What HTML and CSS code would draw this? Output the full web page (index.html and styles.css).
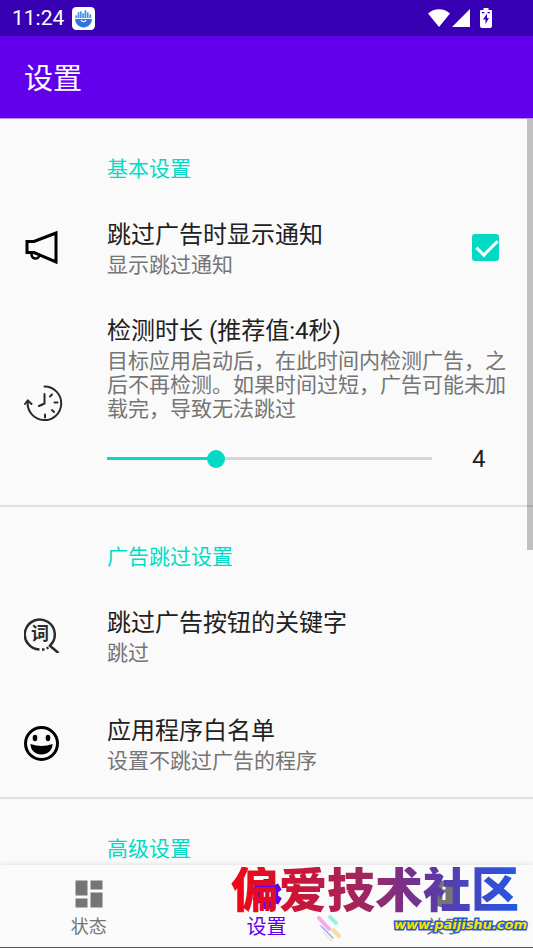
FILE: index.html
```html
<!DOCTYPE html>
<html lang="zh-CN">
<head>
    <meta charset="UTF-8">
    <meta name="viewport" content="width=device-width, initial-scale=1.0">
    <title>设置</title>
    <link rel="stylesheet" href="styles.css">
</head>
<body>
    <div class="status-bar">
        <span class="clock">11:24</span>
        <svg class="app-badge" viewBox="0 0 22 22">
            <rect width="22" height="22" rx="4" fill="#fff"/>
            <path d="M3 11.500h16c0 4.500-3.500 8-8 8s-8-3.500-8-8z" fill="#2f76e0"/>
            <path d="M4 10.500V8M6.200 10.500V5M8.400 10.500V4M10.600 10.500V6M12.800 10.500V3M15 10.500V5M17.500 10.500V7" stroke="#4a90e8" stroke-width="1.700"/>
            <path d="M8.500 12.500q2.500 3 5 0" fill="none" stroke="#fff" stroke-width="1.200"/>
        </svg>
        <div class="status-icons">
            <svg class="wifi" viewBox="0 0 22 18"><path d="M0 4.500C6-1.300 16-1.300 22 4.500L11 18z"/></svg>
            <svg class="signal" viewBox="0 0 18 18"><path d="M18 0v18H0z"/></svg>
            <svg class="battery" viewBox="0 0 12 20">
                <path fill-rule="evenodd" d="M3.500 0h5v2H11q1 0 1 1v15q0 2-2 2H2q-2 0-2-2V3q0-1 1-1h2.500zM7 5.500L3 11.500h2.500V16L9 10H7zM2 4v1.300h2.500V4zM7.500 4v1.300H10V4z"/>
            </svg>
        </div>
    </div>

    <header class="app-bar">
        <h1>设置</h1>
    </header>

    <main class="content">
        <section class="group">
            <h2>基本设置</h2>
            <label class="row">
                <span class="row-icon">
                    <svg viewBox="0 0 36 36" fill="none" stroke="#000" stroke-width="3">
                        <path d="M3 12.500h7L32 4v29L10 23.500H3z"/>
                        <path d="M7.500 24c-.5 7 7.500 7 8 2" stroke-width="2.500"/>
                    </svg>
                </span>
                <span class="row-text">
                    <span class="row-title">跳过广告时显示通知</span>
                    <span class="row-summary">显示跳过通知</span>
                </span>
                <input class="check" type="checkbox" checked>
            </label>
            <div class="row">
                <span class="row-icon">
                    <svg class="clock-icon" viewBox="0 0 40 38" fill="none" stroke="#2b2b2b" stroke-width="2" stroke-linecap="round">
                        <path d="M20.500 2.500a16.800 16.800 0 1 1-16.800 15.500"/>
                        <path d="M1 20l2.800-3.500L7.500 20M20.500 10v9.500L15 22"/>
                        <path d="M26 12.500l2-2M30.500 18.500h3M28 26l2 2M21 30.500v3"/>
                    </svg>
                </span>
                <div class="row-text duration">
                    <label class="row-title" for="duration">检测时长 (推荐值:4秒)</label>
                    <span class="row-summary">目标应用启动后，在此时间内检测广告，之后不再检测。如果时间过短，广告可能未加载完，导致无法跳过</span>
                    <div class="slider">
                        <input id="duration" type="range" min="1" max="10" value="4">
                        <output for="duration">4</output>
                    </div>
                </div>
            </div>
        </section>

        <section class="group">
            <h2>广告跳过设置</h2>
            <div class="row">
                <span class="row-icon">
                    <svg viewBox="0 0 36 36" fill="none" stroke="#2b2b2b" stroke-width="2.500">
                        <path d="M15.500 32.500A15 15 0 1 1 26 28.500M18 32.500h2.500M22.500 31.500l2-1M25 28l9.500 8"/>
                        <text class="glyph" x="7" y="23">词</text>
                    </svg>
                </span>
                <div class="row-text">
                    <span class="row-title">跳过广告按钮的关键字</span>
                    <span class="row-summary">跳过</span>
                </div>
            </div>
            <div class="row">
                <span class="row-icon">
                    <svg viewBox="0 0 36 36">
                        <circle cx="17.500" cy="18.500" r="16" fill="none" stroke="#000" stroke-width="3"/>
                        <ellipse cx="11" cy="13" rx="2.300" ry="3.200"/>
                        <ellipse cx="24" cy="13" rx="2.300" ry="3.200"/>
                        <path d="M6.500 19q11 4 22 0c0 6-4.500 10.500-11 10.500s-11-4.500-11-10.500z"/>
                    </svg>
                </span>
                <div class="row-text">
                    <span class="row-title">应用程序白名单</span>
                    <span class="row-summary">设置不跳过广告的程序</span>
                </div>
            </div>
        </section>

        <section class="group">
            <h2>高级设置</h2>
        </section>
        <div class="scroll-thumb"></div>
    </main>

    <nav class="bottom-nav">
        <a href="#status">
            <svg viewBox="0 0 24 24"><path d="M3 13h8V3H3v10zm0 8h8v-6H3v6zm10 0h8V11h-8v10zm0-18v6h8V3h-8z"/></svg>
            <span>状态</span>
        </a>
        <a href="#settings" class="active">
            <svg viewBox="0 0 24 24"><path d="M19.400 13c.1-.3.1-.6.1-1s0-.7-.1-1l2.100-1.600c.2-.2.200-.4.100-.6l-2-3.500c-.1-.2-.4-.3-.6-.2l-2.500 1c-.5-.4-1.100-.7-1.700-1l-.4-2.600c0-.2-.2-.5-.4-.5h-4c-.2 0-.4.200-.5.400l-.4 2.700c-.6.200-1.100.6-1.700 1l-2.500-1c-.2-.1-.5 0-.6.200l-2 3.500c-.1.200-.1.500.1.600L4.600 11a8 8 0 0 0 0 2l-2.100 1.600c-.2.200-.2.400-.1.600l2 3.500c.1.200.4.300.6.200l2.500-1c.5.400 1.100.7 1.700 1l.4 2.600c0 .2.200.5.4.5h4c.2 0 .4-.2.5-.4l.4-2.700c.6-.2 1.100-.6 1.700-1l2.500 1c.2.100.5 0 .6-.2l2-3.500c.1-.2.1-.5-.1-.6zM12 15.500a3.500 3.500 0 1 1 0-7 3.500 3.500 0 0 1 0 7z"/></svg>
            <span>设置</span>
        </a>
        <a href="#about">
            <svg viewBox="0 0 24 24"><path d="M12 3a9 9 0 1 0 0 18 9 9 0 0 0 0-18zm1 13h-2v-5h2v5zm0-7h-2V7h2v2z"/></svg>
            <span>关于</span>
        </a>
    </nav>

    <div class="watermark">
        <div class="watermark-name">偏爱技术社区</div>
        <svg class="streaks" viewBox="0 0 28 28" stroke-linecap="round">
            <path d="M4 3l10 11" stroke="#f7a8ee" stroke-width="4"/>
            <path d="M15 2l6 6" stroke="#9df0e4" stroke-width="4"/>
            <path d="M18 15l6 6" stroke="#fbdc9c" stroke-width="4"/>
            <path d="M6 11l12 12" stroke="#8fb5ee" stroke-width="1.500"/>
            <path d="M8 17l9 9" stroke="#fbe3b5" stroke-width="1.500"/>
        </svg>
        <div class="watermark-url">www.paijishu.com</div>
    </div>
</body>
</html>
```
FILE: styles.css
```css
* {
    margin: 0;
    padding: 0;
    box-sizing: border-box;
}

body {
    position: relative;
    display: flex;
    flex-direction: column;
    height: 100vh;
    overflow: hidden;
    background: #fafafa;
    color: #212121;
    font-family: Roboto, 'Noto Sans CJK SC', sans-serif;
    border-bottom: 1px solid #555;
}

.status-bar {
    display: flex;
    align-items: center;
    flex: none;
    height: 36px;
    padding: 0 41px 0 12px;
    background: #3700b3;
    color: #fff;
}

.clock {
    font-size: 21px;
    margin-right: 8px;
}

.app-badge {
    width: 23px;
    height: 23px;
}

.status-icons {
    display: flex;
    align-items: center;
    margin-left: auto;
    fill: #fff;
}

.wifi {
    width: 22px;
    height: 18px;
    margin-right: 2px;
}

.signal {
    width: 18px;
    height: 18px;
    margin-right: 10px;
}

.battery {
    width: 12px;
    height: 20px;
}

.app-bar {
    display: flex;
    align-items: center;
    flex: none;
    height: 83px;
    padding: 0 24px 2px;
    background: #6200ee;
    color: #fff;
    border-bottom: 1px solid #b794e8;
}

.app-bar h1 {
    font-size: 29px;
    font-weight: 400;
}

.content {
    position: relative;
    flex: 1;
    min-height: 0;
    overflow: hidden;
}

.group + .group {
    border-top: 2px solid #e0e0e0;
}

.group h2 {
    padding: 38px 24px 12px 107px;
    font-size: 21px;
    line-height: 24px;
    font-weight: 400;
    color: #03dac5;
}

.row {
    display: flex;
    align-items: center;
    padding-right: 26px;
}

.row-icon {
    flex: none;
    width: 107px;
    padding-left: 24px;
}

.row-icon svg {
    display: block;
    width: 36px;
    height: 36px;
}

.row-icon .clock-icon {
    width: 40px;
    height: 38px;
}

.glyph {
    font-size: 18px;
    font-weight: 700;
    fill: #2b2b2b;
    stroke: none;
}

.row-text {
    display: flex;
    flex-direction: column;
    flex: 1;
    gap: 1px;
    padding: 25px 0 24px;
}

.row-title {
    font-size: 24px;
    line-height: 34px;
}

.row-summary {
    font-size: 21px;
    line-height: 24px;
    color: #757575;
}

.duration {
    padding: 13px 0 10px;
}

.check {
    position: relative;
    appearance: none;
    width: 27px;
    height: 27px;
    margin-right: 8px;
    border: 3px solid #757575;
    border-radius: 3px;
}

.check:checked {
    border-color: #03dac5;
    background: #03dac5;
}

.check:checked::after {
    content: '';
    position: absolute;
    left: 6px;
    top: -2px;
    width: 9px;
    height: 18px;
    border: solid #fff;
    border-width: 0 3px 3px 0;
    transform: rotate(45deg);
}

.slider {
    display: flex;
    align-items: center;
    height: 73px;
}

.slider input {
    appearance: none;
    flex: 1;
    min-width: 0;
    height: 18px;
    margin: 0 32px 0 -8px;
    background: none;
}

.slider input::-webkit-slider-runnable-track {
    height: 3px;
    background: linear-gradient(to right, transparent 8px, #03dac5 8px 34%, #d6d6d6 34% calc(100% - 8px), transparent calc(100% - 8px));
}

.slider input::-webkit-slider-thumb {
    appearance: none;
    width: 18px;
    height: 18px;
    margin-top: -7px;
    border-radius: 50%;
    background: #03dac5;
}

.slider output {
    width: 34px;
    margin-right: 1px;
    font-size: 24px;
}

.scroll-thumb {
    position: absolute;
    top: 0;
    right: 0;
    width: 6px;
    height: 431px;
    background: rgba(0, 0, 0, 0.23);
}

.bottom-nav {
    display: flex;
    flex: none;
    height: 82px;
    background: #fafafa;
    box-shadow: 0 -1px 4px rgba(0, 0, 0, 0.1);
    z-index: 1;
}

.bottom-nav a {
    display: flex;
    flex-direction: column;
    align-items: center;
    flex: 1;
    padding-top: 11px;
    color: #757575;
    font-size: 18px;
    line-height: 30px;
    text-decoration: none;
}

.bottom-nav svg {
    width: 36px;
    height: 36px;
    fill: currentColor;
}

.bottom-nav .active {
    color: #6200ee;
    font-size: 20px;
}

.watermark {
    position: absolute;
    right: 6px;
    bottom: 4px;
    z-index: 2;
    display: grid;
    grid-template-columns: 84px 28px 1fr;
    width: 296px;
    pointer-events: none;
}

.watermark-name {
    grid-column: 1 / -1;
    font-size: 48px;
    line-height: 48px;
    font-weight: 900;
    color: transparent;
    background: linear-gradient(to right, #f40612, #a02560 45%, #5b3aa8 70%, #1b5cec);
    background-clip: text;
    -webkit-background-clip: text;
}

.streaks {
    grid-column: 2;
    width: 28px;
    height: 28px;
}

.watermark-url {
    font-family: 'DejaVu Sans', sans-serif;
    font-size: 13px;
    line-height: 20px;
    font-weight: 700;
    font-style: italic;
    text-align: right;
    color: #ffe000;
    -webkit-text-stroke: 3px #1c5ed8;
    paint-order: stroke fill;
}
```
